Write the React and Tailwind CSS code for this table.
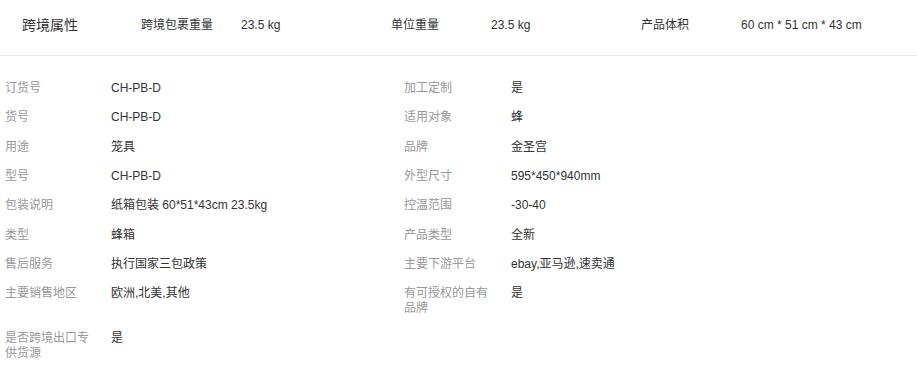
import React from "react";

const left = [
  ["订货号", "CH-PB-D"],
  ["货号", "CH-PB-D"],
  ["用途", "笼具"],
  ["型号", "CH-PB-D"],
  ["包装说明", "纸箱包装 60*51*43cm 23.5kg"],
  ["类型", "蜂箱"],
  ["售后服务", "执行国家三包政策"],
  ["主要销售地区", "欧洲,北美,其他"],
  ["是否跨境出口专供货源", "是"],
];
const right = [
  ["加工定制", "是"],
  ["适用对象", "蜂"],
  ["品牌", "金圣宫"],
  ["外型尺寸", "595*450*940mm"],
  ["控温范围", "-30-40"],
  ["产品类型", "全新"],
  ["主要下游平台", "ebay,亚马逊,速卖通"],
  ["有可授权的自有品牌", "是"],
  null,
];

const font = { fontFamily: '"Liberation Sans", Arial, "Noto Sans CJK SC", sans-serif' };

function Cell({ item, labelW }) {
  if (!item) return <div />;
  return (
    <div className="flex items-start py-[7.2px] text-[12px] leading-[15px]">
      <div className={`${labelW} shrink-0 pr-[16px] text-[#999]`}>{item[0]}</div>
      <div className="text-[#333]">{item[1]}</div>
    </div>
  );
}

export default function App() {
  const rows = left.map((l, i) => [l, right[i]]);
  return (
    <div className="w-[917px] h-[370px] bg-white overflow-hidden" style={font}>
      <div className="h-[56px] border-b border-[#e8e8e8]">
        <div className="h-[50px] flex items-center text-[#333]">
          <div className="w-[141px] pl-[22px] text-[14px]">跨境属性</div>
          {[
            ["跨境包裹重量", "23.5 kg"],
            ["单位重量", "23.5 kg"],
            ["产品体积", "60 cm * 51 cm * 43 cm"],
          ].map(([k, v]) => (
            <div key={k} className="w-[250px] flex text-[12px]">
              <div className="w-[100px]">{k}</div>
              <div>{v}</div>
            </div>
          ))}
        </div>
      </div>
      <div className="pt-[17.6px] pl-[5px]">
        {rows.map(([l, r], i) => (
          <div key={i} className="grid grid-cols-[399px_1fr]">
            <Cell item={l} labelW="w-[106px]" />
            <Cell item={r} labelW="w-[107px]" />
          </div>
        ))}
      </div>
    </div>
  );
}
